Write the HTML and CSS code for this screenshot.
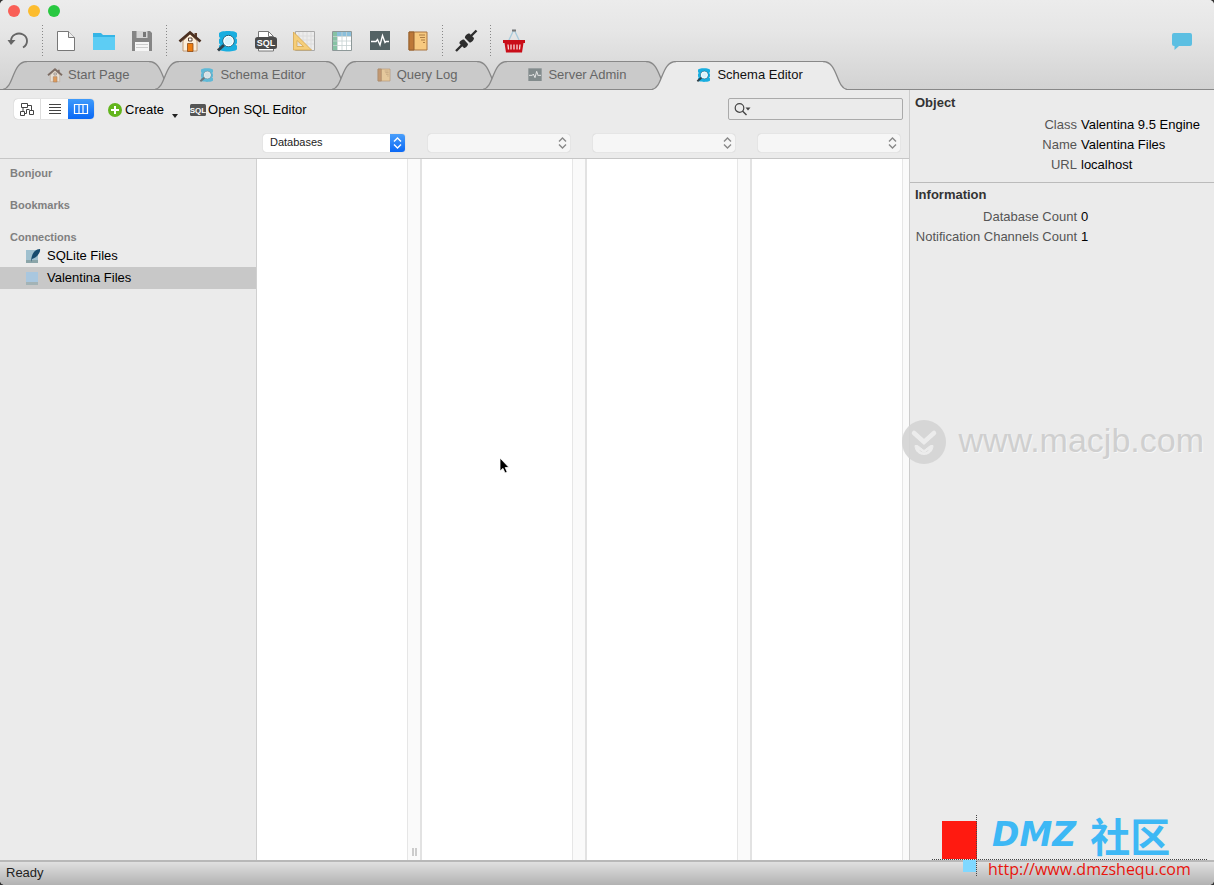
FILE: index.html
```html
<!DOCTYPE html>
<html lang="en">
<head>
<meta charset="utf-8">
<title>Schema Editor</title>
<link rel="stylesheet" href="styles.css">
</head>
<body>
<svg class="defs" aria-hidden="true">
  <defs>
    <symbol id="i-home" viewBox="0 0 24 24">
      <path d="M5 12v10h14V12l-7-7z" fill="#fbeedb" stroke="#b98b60" stroke-width=".8"/>
      <path d="M16.500 4h2.500v5l-2.500-2z" fill="#5c3b28"/>
      <path d="M9.500 14.500h5.500v8h-5.500z" fill="#ee7d10" stroke="#8a4a16" stroke-width=".8"/>
      <path d="M10.500 9h3.500v3h-3.500z" fill="#fff" stroke="#4a3020" stroke-width=".9"/>
      <path d="M1.500 12.500 12 3.500l10.500 9" fill="none" stroke="#4b3021" stroke-width="2.800"/>
    </symbol>
    <symbol id="i-schema" viewBox="0 0 24 24">
      <path d="M3 4.500c0-3.300 18-3.300 18 0v2.700c0 .8-.6 1.300-1.500 1.800.9.500 1.500 1 1.500 1.800v3c0 .8-.6 1.300-1.500 1.800.9.500 1.500 1 1.500 1.800V20c0 3.300-18 3.300-18 0v-2.700c0-.8.6-1.300 1.500-1.800-.9-.5-1.500-1-1.500-1.800v-3C3 10 3.600 9.500 4.500 9 3.600 8.500 3 8 3 7.200z" fill="#19aee0"/>
      <path d="m2 21.500 6-5.500" stroke="#31424a" stroke-width="3"/>
      <circle cx="12.500" cy="12" r="5.600" fill="#d9f3fc" stroke="#24566b" stroke-width="1"/>
      <circle cx="12.500" cy="12" r="4.600" fill="#d9f3fc" stroke="#fff" stroke-width="1.200"/>
    </symbol>
    <symbol id="i-log" viewBox="0 0 24 24">
      <path d="M3 3h18v18H3z" fill="#f7c97f" stroke="#a97440"/>
      <path d="M3 3h5v18H3z" fill="#bd7838" stroke="#95602e"/>
      <path d="M13 6h6M14 8.500h5M15 11h4M17 13.500h2" stroke="#9a6a35" stroke-width=".8"/>
    </symbol>
    <symbol id="i-admin" viewBox="0 0 24 24">
      <path d="M2 2h20v19H2z" fill="#536264"/>
      <path d="M3 12.500h5l1.500-2 2.500 5.500 2.500-9.500 2.500 7 1-1h3" fill="none" stroke="#fff" stroke-width="1.400"/>
    </symbol>
    <symbol id="i-updown" viewBox="0 0 10 14">
      <path d="M1.500 5.500 5 2l3.500 3.500M1.500 8.500 5 12l3.500-3.500" fill="none" stroke="currentColor" stroke-width="1.400"/>
    </symbol>
    <symbol id="tab-l" viewBox="0 0 24 29">
      <path class="tab-fill" d="M0 29C11 27 9 .5 24 .5V29z"/>
      <path class="tab-base" d="M0 28.500h24"/>
      <path class="tab-line" d="M0 28.500C11 27 9 .5 24 .5"/>
    </symbol>
    <symbol id="tab-r" viewBox="0 0 24 29">
      <path class="tab-fill" d="M24 29C13 27 15 .5 0 .5V29z"/>
      <path class="tab-base" d="M0 28.500h24"/>
      <path class="tab-line" d="M24 28.500C13 27 15 .5 0 .5"/>
    </symbol>
  </defs>
</svg>

<div class="window">
  <header class="head">
    <div class="titlebar">
      <button class="light red" aria-label="Close"></button>
      <button class="light yellow" aria-label="Minimize"></button>
      <button class="light green" aria-label="Zoom"></button>
    </div>
    <div class="toolbar" role="toolbar">
      <button class="tool" aria-label="Undo"><svg viewBox="0 0 24 24"><path d="M5 12a8 7.500 0 1 1 12 6.500" fill="none" stroke="#666" stroke-width="1.900"/><path d="M1.500 11h8l-4.500 5z" fill="#666"/></svg></button>
      <span class="sep"></span>
      <button class="tool" aria-label="New"><svg viewBox="0 0 24 24"><path d="M3.500 2.500h11l6 6v13h-17z" fill="#fff" stroke="#777"/><path d="M14.500 2.500v6h6" fill="#eee" stroke="#777"/></svg></button>
      <button class="tool" aria-label="Open"><svg viewBox="0 0 24 24"><path d="M1 4h8l2 2h12v15H1z" fill="#35b5e6"/><path d="M1 8h22v13H1z" fill="#5dcdf4"/></svg></button>
      <button class="tool" aria-label="Save"><svg viewBox="0 0 24 24"><path d="M2 2h18l2 2v18H2z" fill="#858585"/><path d="M6.500 2h11v7h-11z" fill="#d5d5d5"/><path d="M13 3h3v5h-3z" fill="#777"/><path d="M5 13h14v9H5z" fill="#f5f5f5"/><path d="M6 15.500h12M6 18.500h12" stroke="#ccc"/></svg></button>
      <span class="sep"></span>
      <button class="tool" aria-label="Start Page"><svg><use href="#i-home"/></svg></button>
      <button class="tool" aria-label="Schema Editor"><svg><use href="#i-schema"/></svg></button>
      <button class="tool" aria-label="SQL Editor"><svg viewBox="0 0 24 24"><path d="M4.500 22V2.500h10l5 5V22z" fill="#fff" stroke="#777"/><path d="M14.500 2.500v5h5" fill="none" stroke="#777"/><rect x="1" y="8" width="22" height="12" rx="2.500" fill="#4b4b4b"/><text class="sql-text" x="12" y="17" text-anchor="middle">SQL</text></svg></button>
      <button class="tool" aria-label="Form Editor"><svg viewBox="0 0 24 24"><path d="M3.500 2.500h19v19h-19z" fill="#ececec" stroke="#aaa"/><path d="M7 3v18M11 3v18M15 3v18M19 3v18M4 7h18M4 11h18M4 15h18" stroke="#dcdcdc"/><path fill-rule="evenodd" d="M1.500 3v18h18zM5 11.500l6.500 6H5z" fill="#f5ce79" stroke="#d5a64c" stroke-width=".8"/></svg></button>
      <button class="tool" aria-label="Data Editor"><svg viewBox="0 0 24 24"><path d="M2.500 2.500h19v19h-19z" fill="#fff" stroke="#8d9898"/><path d="M3 3h18v4H3z" fill="#8bbfdb"/><path d="M3 3h4v18H3z" fill="#86c2a4"/><path d="M7.500 7v14M12 3v18M16.500 3v18M3 7.500h18M3 12h18M3 16.500h18" stroke="#c6d2d2" stroke-width=".8"/></svg></button>
      <button class="tool" aria-label="Server Admin"><svg><use href="#i-admin"/></svg></button>
      <button class="tool" aria-label="Query Log"><svg><use href="#i-log"/></svg></button>
      <span class="sep"></span>
      <button class="tool" aria-label="Connect"><svg viewBox="0 0 24 24"><path d="m2 22 6-6M16 8l6.500-6.500" stroke="#2e2e2e" stroke-width="2.400"/><path d="m5.500 14.500 4.500 4.500c2 0 4-2.500 4-4l-4-4.500c-2 0-5 2-4.500 4zM11 9l4.500 4.500c2 .5 4.500-2.500 4.500-4.500L15.500 4.500C13.500 4 10.500 7 11 9z" fill="#2e2e2e"/></svg></button>
      <span class="sep"></span>
      <button class="tool" aria-label="Shop"><svg viewBox="0 0 24 24"><path d="M6.500 12 11.500 1.500h1l5 10.500" fill="none" stroke="#a9cbdc" stroke-width="1.300"/><path d="M10 1.500h4" stroke="#777" stroke-width="2"/><path d="M1 11h22v3h-1.500L20 23.500H4L2.500 14H1z" fill="#c90d18"/><path d="M6 15.500l.5 5M9 15.500v5M12 15.500v5M15 15.500v5M18 15.500l-.5 5" stroke="#f7dada" stroke-width="1.300"/></svg></button>
      <button class="tool chat" aria-label="Feedback"><svg viewBox="0 0 24 24"><path d="M4 4h16q2 0 2 2v9q0 2-2 2H9l-4.500 4V17H4q-2 0-2-2V6q0-2 2-2z" fill="#5cbfe2"/></svg></button>
    </div>
    <nav class="tabs" role="tablist">
      <button class="tab" role="tab"><svg class="edge"><use href="#tab-l"/></svg><span class="face"><svg class="mini"><use href="#i-home"/></svg>Start Page</span><svg class="edge"><use href="#tab-r"/></svg></button>
      <button class="tab" role="tab"><svg class="edge"><use href="#tab-l"/></svg><span class="face"><svg class="mini"><use href="#i-schema"/></svg>Schema Editor</span><svg class="edge"><use href="#tab-r"/></svg></button>
      <button class="tab" role="tab"><svg class="edge"><use href="#tab-l"/></svg><span class="face"><svg class="mini"><use href="#i-log"/></svg>Query Log</span><svg class="edge"><use href="#tab-r"/></svg></button>
      <button class="tab" role="tab"><svg class="edge"><use href="#tab-l"/></svg><span class="face"><svg class="mini"><use href="#i-admin"/></svg>Server Admin</span><svg class="edge"><use href="#tab-r"/></svg></button>
      <button class="tab active" role="tab" aria-selected="true"><svg class="edge"><use href="#tab-l"/></svg><span class="face"><svg class="mini"><use href="#i-schema"/></svg>Schema Editor</span><svg class="edge"><use href="#tab-r"/></svg></button>
    </nav>
  </header>

  <main class="body">
    <section class="editor">
      <div class="actions">
        <div class="segments">
          <button aria-label="Diagram"><svg viewBox="0 0 16 14"><path d="M2.500 1.500h6v4h-6zM1.500 9.500h4v4h-4zM10.500 8.500h4v4h-4zM4 5.500v4M8.500 3.500h4v5M5.500 11.500h2v-4h3" fill="none" stroke="#444"/></svg></button>
          <button aria-label="List"><svg viewBox="0 0 16 14"><path d="M2 2.500h12M2 5.500h12M2 8.500h12M2 11.500h12" stroke="#444"/></svg></button>
          <button class="on" aria-label="Columns"><svg viewBox="0 0 16 14"><path d="M1.500 2.500h13v9h-13zM6 2.500v9M10 2.500v9" fill="none" stroke="#fff" stroke-width="1.200"/></svg></button>
        </div>
        <button class="action create"><svg viewBox="0 0 14 14"><circle cx="7" cy="7" r="7" fill="#62b51c"/><path d="M7 3v8M3 7h8" stroke="#fff" stroke-width="2"/></svg>Create<svg class="caret" viewBox="0 0 8 14"><path d="M1 10h6l-3 4z" fill="#222"/></svg></button>
        <button class="action open-sql"><svg class="sql" viewBox="0 0 16 14"><rect y="1" width="16" height="12" rx="1.500" fill="#555"/><text class="sql-text" x="8" y="10" text-anchor="middle">SQL</text></svg>Open SQL Editor</button>
        <label class="search">
          <svg viewBox="0 0 18 14"><circle cx="5.500" cy="6" r="4.300" fill="none" stroke="#444" stroke-width="1.200"/><path d="m8.500 9 4 4" stroke="#444" stroke-width="1.400"/><path d="M11.500 5.500h5L14 8.500z" fill="#444"/></svg>
          <input type="search" aria-label="Search">
        </label>
      </div>
      <div class="pickers">
        <span></span>
        <span class="picker live"><select aria-label="Column 1"><option>Databases</option></select><svg><use href="#i-updown"/></svg></span>
        <span class="picker"><select aria-label="Column 2" disabled></select><svg><use href="#i-updown"/></svg></span>
        <span class="picker"><select aria-label="Column 3" disabled></select><svg><use href="#i-updown"/></svg></span>
        <span class="picker"><select aria-label="Column 4" disabled></select><svg><use href="#i-updown"/></svg></span>
      </div>
      <div class="browser">
        <aside class="side">
          <h3>Bonjour</h3>
          <h3>Bookmarks</h3>
          <h3 class="open">Connections</h3>
          <ul>
            <li><svg viewBox="0 0 16 16"><path d="M1 2h12v13H1z" fill="#9fc0cf"/><path d="M1 12h12v3H1z" fill="#8ba5a9"/><path d="M6 14C6 8 9 1 15 1c1 4-4 9-8 10z" fill="#174b6e"/></svg>SQLite Files</li>
            <li class="selected"><svg viewBox="0 0 16 16"><path d="M1 2h12v10H1z" fill="#a9c7df"/><path d="M1 12h12v3H1z" fill="#a3b3b6"/></svg>Valentina Files</li>
          </ul>
        </aside>
        <div class="col"><span class="grip"></span></div>
        <div class="col"></div>
        <div class="col"></div>
        <div class="col last"></div>
      </div>
    </section>

    <aside class="inspector">
      <section>
        <h2>Object</h2>
        <dl>
          <dt>Class</dt><dd>Valentina 9.5 Engine</dd>
          <dt>Name</dt><dd>Valentina Files</dd>
          <dt>URL</dt><dd>localhost</dd>
        </dl>
      </section>
      <section>
        <h2>Information</h2>
        <dl>
          <dt>Database Count</dt><dd>0</dd>
          <dt>Notification Channels Count</dt><dd>1</dd>
        </dl>
      </section>
    </aside>
  </main>

  <footer class="status">Ready</footer>

  <svg class="cursor" viewBox="0 0 12 18" aria-hidden="true"><path d="M1 1v13l3-2.600 2 4.600 2.200-1-2-4.500H10z" fill="#000" stroke="#fff" stroke-width=".8"/></svg>

  <div class="mark">
    <svg viewBox="0 0 44 44"><circle cx="22" cy="22" r="22" fill="#d4d4d4"/><path d="m12 13 10 9 10-9" fill="none" stroke="#ededed" stroke-width="4.500" stroke-linecap="round"/><path d="M13 25.500c0 12 18 12 18 0h-2.500L22 30.500l-6.500-5z" fill="#ededed" stroke="#ededed" stroke-linejoin="round"/><path d="M17 29.500c2 4 8 4 10 0L22 33z" fill="#d4d4d4"/></svg>
    <span>www.macjb.com</span>
  </div>

  <div class="badge">
    <svg viewBox="0 0 282 62" aria-hidden="true"><path d="M10 6h35v38H10z" fill="#ff1a10"/><path d="M31 45h13v12H31z" fill="#80d8ff"/><path d="M44.500 0v62M0 44.500h276" stroke="#444" stroke-dasharray="1 1"/></svg>
    <div class="badge-name"><i>DMZ</i><b>社区</b></div>
    <a class="badge-link" href="#">http://www.dmzshequ.com</a>
  </div>
</div>
</body>
</html>
```

FILE: styles.css
```css
* { box-sizing: border-box; }
html { background: #333; height: 100%; }
body {
  margin: 0;
  height: 100%;
  font: 13px/20px "Liberation Sans", Arial, sans-serif;
  color: #111;
}
button, input, select { font: inherit; color: inherit; }
button { border: 0; padding: 0; background: none; }
svg { display: block; flex: none; }
h2, h3, dl, dd, ul { margin: 0; padding: 0; }

.defs { position: absolute; width: 0; height: 0; }

.window {
  position: relative;
  display: flex;
  flex-direction: column;
  min-height: 100%;
  background: #ebebeb;
  border-radius: 5px;
  overflow: hidden;
}

/* Title bar, toolbar and tabs */
.head { background: linear-gradient(#ececec, #e6e6e6 35%, #d2d2d2); }
.titlebar { display: flex; gap: 8px; padding: 5px 8px; height: 22px; }
.light { width: 12px; height: 12px; border-radius: 50%; }
.red { background: #f95f57; }
.yellow { background: #fcbc2e; }
.green { background: #28c840; }

.toolbar { display: flex; align-items: center; height: 39px; margin-left: -1px; padding-bottom: 2px; }
.tool { display: flex; justify-content: center; width: 38px; }
.tool svg { width: 24px; height: 24px; }
.chat { margin-left: auto; margin-right: 13px; }
.sep {
  width: 10px;
  height: 31px;
  background: repeating-linear-gradient(#888 0 1px, transparent 1px 3px) no-repeat center / 1px 100%;
}
.sql-text { font: bold 8px "Liberation Sans", Arial, sans-serif; fill: #fff; }
.tool .sql-text { font-size: 9px; }

.tabs {
  display: flex;
  padding-left: 3px;
  height: 29px;
  background: linear-gradient(#888, #888) no-repeat bottom / 100% 1px;
}
.tab { --fill: #cacaca; --base: #888; display: flex; color: #666; }
.tab + .tab { margin-left: -18px; }
.tab.active { --fill: #ebebeb; --base: #ebebeb; color: #111; }
.edge { width: 24px; height: 29px; }
.tab-fill { fill: var(--fill); }
.tab-base { stroke: var(--base); }
.tab-line { fill: none; stroke: #888; stroke-width: 1.3; }
.face {
  display: flex;
  align-items: center;
  gap: 5px;
  height: 29px;
  padding: 0 20px 1px;
  background: var(--fill);
  border-top: 1px solid #888;
  border-bottom: 1px solid var(--base);
}
.mini { width: 16px; height: 16px; opacity: .6; }
.active .mini { opacity: 1; }

/* Body */
.body { flex: 1; display: grid; grid-template-columns: minmax(0, 1fr) 305px; }
.editor { display: flex; flex-direction: column; }

.actions { display: flex; align-items: center; height: 38px; padding: 0 6px 0 14px; }
.segments { display: flex; height: 20px; background: #fff; border-radius: 4px; box-shadow: 0 0 1px #999; }
.segments button { display: flex; align-items: center; justify-content: center; width: 26px; }
.segments button + button { width: 28px; border-left: 1px solid #ddd; }
.segments svg { width: 16px; height: 14px; }
.segments button.on { width: 26px; border: 0; border-radius: 0 4px 4px 0; background: linear-gradient(#3f9bfb, #0a68f5); }
.action { display: flex; align-items: center; gap: 3px; padding-top: 2px; color: #000; }
.action svg { width: 14px; height: 14px; }
.action .sql { width: 16px; }
.open-sql { gap: 2px; }
.create { margin: 0 11px 0 14px; }
.action .caret { width: 8px; height: 14px; margin: 0 0 -2px 4px; }
.search {
  display: flex;
  align-items: center;
  width: 175px;
  height: 22px;
  margin-left: auto;
  padding: 0 5px;
  border: 1px solid #aaa;
  border-radius: 2px;
}
.search svg { width: 18px; height: 14px; }
.search input { flex: 1; min-width: 0; border: 0; outline: 0; background: none; }

.pickers, .browser { display: grid; grid-template-columns: 257px repeat(3, 165px) minmax(0, 1fr); }
.pickers { height: 31px; align-items: center; border-bottom: 1px solid #c6c6c6; }
.picker { position: relative; height: 18px; width: 142px; margin-left: 6px; color: #888; }
.picker select {
  appearance: none;
  display: block;
  width: 100%;
  height: 18px;
  padding: 0 7px 1px;
  border: 0;
  border-radius: 3px;
  background: #f6f6f6;
  box-shadow: 0 0 1px #aaa;
  font-size: 11px;
  line-height: 17px;
  color: #222;
  opacity: 1;
}
.picker.live select { background: #fff; }
.picker svg { position: absolute; top: 0; right: 0; width: 15px; height: 18px; padding: 2px; pointer-events: none; }
.picker.live svg { color: #fff; background: linear-gradient(#4a9ffb, #0a68f5); border-radius: 0 3px 3px 0; }

.browser { flex: 1; }
.side { border-right: 1px solid #d0d0d0; padding-top: 4px; }
.side h3 { font-size: 11px; line-height: 20px; margin-bottom: 12px; padding-left: 10px; color: #808080; }
.side .open { margin: 0; height: 18px; }
.side ul { list-style: none; color: #000; }
.side li { display: flex; align-items: center; gap: 6px; height: 22px; padding-left: 25px; }
.side li svg { width: 16px; height: 16px; }
.selected { background: #c8c8c8; }
.col {
  display: flex;
  align-items: end;
  justify-content: end;
  padding: 0 5px 4px 0;
  border-right: 2px solid #e2e2e2;
  background: linear-gradient(90deg, #e6e6e6 1px, #fafafa 1px) no-repeat right / 13px 100%, #fff;
}
.col.last { border-right: 0; background-size: 7px 100%, auto; }
.grip { width: 5px; height: 8px; margin-right: -2px; border: solid #ccc; border-width: 0 2px; }

.inspector { border-left: 1px solid #ccc; }
.inspector section { padding: 3px 0 7px 5px; border-bottom: 1px solid #bbb; }
.inspector section:last-child { padding-top: 2px; border: 0; }
.inspector h2 { font-size: 13px; line-height: 20px; color: #333; }
.inspector dl { display: grid; grid-template-columns: 162px 1fr; column-gap: 4px; padding-top: 2px; }
.inspector dt { display: flex; justify-content: flex-end; white-space: nowrap; color: #555; }
.inspector dd { color: #000; }

.status {
  height: 25px;
  padding: 0 6px;
  line-height: 22px;
  color: #222;
  border-top: 2px solid #b8b8b8;
  background: linear-gradient(#e0e0e0, #b2b2b2);
}

/* Floating layers */
.cursor { position: absolute; left: 499px; top: 457px; width: 12px; height: 18px; }
.mark { position: absolute; right: 10px; top: 420px; display: flex; align-items: center; gap: 12px; pointer-events: none; }
.mark svg { width: 44px; height: 44px; opacity: .9; }
.mark span { padding-bottom: 4px; font-size: 34px; line-height: 40px; color: #cfcfcf; text-shadow: 1px 1px 0 #f6f6f6; }
.badge { position: absolute; right: 0; bottom: 8px; width: 282px; height: 62px; padding-left: 56px; }
.badge > svg { position: absolute; left: 0; top: 0; width: 282px; height: 62px; }
.badge-name { display: flex; align-items: center; gap: 14px; height: 40px; margin-left: 4px; color: #3db8f5; white-space: nowrap; }
.badge-name i { font: italic bold 33px/40px "DejaVu Sans", sans-serif; }
.badge-name b { font: bold 40px/36px "Noto Sans CJK SC", sans-serif; }
.badge-link { display: block; margin-top: 2px; font: 16px/24px "Open Sans", sans-serif; color: #e8140c; text-decoration: none; }
```
